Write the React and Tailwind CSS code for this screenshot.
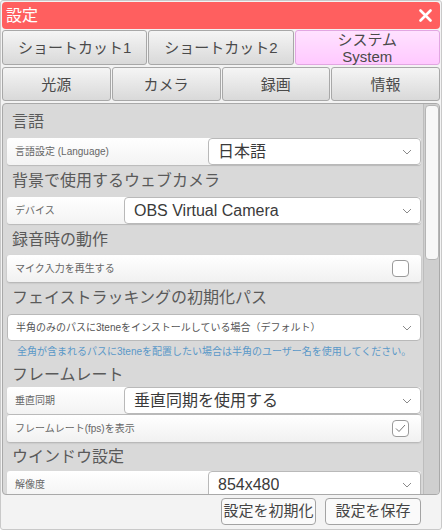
import React from 'react'

const font = { fontFamily: '"Liberation Sans", "Noto Sans CJK JP", sans-serif' }

const Chevron = () => (
  <svg width="10" height="6" viewBox="0 0 10 6" className="shrink-0">
    <path d="M1 1 L5 5 L9 1" fill="none" stroke="#8a8a8a" strokeWidth="1" />
  </svg>
)

const Tab = ({ children, active, className = '' }) => (
  <div
    className={
      'flex items-center justify-center rounded-[3px] border text-[15px] leading-none text-[#4a4a4a] ' +
      (active
        ? 'border-[#e2a6e2] bg-gradient-to-b from-[#ffe2ff] to-[#ffc9ff] '
        : 'border-[#a8a8a8] bg-gradient-to-b from-[#f5f5f5] to-[#d9d9d9] ') +
      className
    }
  >
    {children}
  </div>
)

const Heading = ({ children, className = 'h-[32px]' }) => (
  <div className={'flex items-center pl-[5px] text-[16px] text-[#5a5a5a] ' + className}>{children}</div>
)

const Select = ({ value, small, className = '' }) => (
  <div
    className={
      'flex h-full items-center justify-between rounded-[4px] border border-[#b9b9b9] bg-white pr-[8px] ' +
      (small ? 'pl-[8px] text-[10px] text-[#555] ' : 'pl-[9px] text-[16px] text-[#3a3a3a] ') +
      className
    }
  >
    <span className="truncate">{value}</span>
    <Chevron />
  </div>
)

const Row = ({ label, children, selectLeft }) => (
  <div className="flex h-[27px] rounded-[3px] bg-gradient-to-b from-white to-[#f3f3f3] shadow-[0_1px_1px_rgba(0,0,0,0.15)]">
    <div className={'flex items-center pl-[8px] text-[10px] text-[#666] ' + selectLeft}>{label}</div>
    <div className="flex-1">{children}</div>
  </div>
)

const Checkbox = ({ checked }) => (
  <div className="flex h-[17px] w-[17px] items-center justify-center rounded-[4px] border border-[#9a9a9a] bg-white">
    {checked && (
      <svg width="11" height="9" viewBox="0 0 11 9">
        <path d="M1 4.5 L4 7.5 L10 1" fill="none" stroke="#777" strokeWidth="1" />
      </svg>
    )}
  </div>
)

const CheckRow = ({ label, checked }) => (
  <div className="flex h-[27px] items-center justify-between rounded-[3px] bg-gradient-to-b from-white to-[#f1f1f1] pl-[8px] pr-[12px] shadow-[0_1px_2px_rgba(0,0,0,0.2)]">
    <span className="text-[10px] text-[#666]">{label}</span>
    <Checkbox checked={checked} />
  </div>
)

export default function App() {
  return (
    <div style={font} className="flex h-[530px] w-[442px] flex-col overflow-hidden rounded-[3px] border border-[#c9c9c9] bg-[#f3f3f3] px-px pt-px">
      <div className="flex h-[27px] shrink-0 items-center justify-between rounded-[4px] bg-[#ff5f5f] pl-[4px] pr-[8px] text-[16px] text-white">
        <span>設定</span>
        <svg width="13" height="13" viewBox="0 0 13 13">
          <path d="M1.5 1.5 L11.5 11.5 M11.5 1.5 L1.5 11.5" stroke="white" strokeWidth="2.6" strokeLinecap="round" />
        </svg>
      </div>

      <div className="mt-px grid h-[35px] shrink-0 grid-cols-3 gap-px">
        <Tab>ショートカット1</Tab>
        <Tab>ショートカット2</Tab>
        <Tab active className="flex-col gap-[2px] text-[13px]">
          <span className="leading-none">システム</span>
          <span className="leading-none">System</span>
        </Tab>
      </div>

      <div className="mt-[2px] grid h-[34px] shrink-0 grid-cols-4 gap-px">
        <Tab>光源</Tab>
        <Tab>カメラ</Tab>
        <Tab>録画</Tab>
        <Tab>情報</Tab>
      </div>

      <div className="mt-[2px] flex h-[392px] shrink-0 overflow-hidden rounded-[4px] border border-[#a9a9a9] bg-[#d9d9d9]">
        <div className="flex-1 overflow-hidden pl-[4px] pr-[2px] pt-[2px]">
          <Heading>言語</Heading>
          <Row label="言語設定 (Language)" selectLeft="w-[201px]">
            <Select value="日本語" />
          </Row>
          <Heading>背景で使用するウェブカメラ</Heading>
          <Row label="デバイス" selectLeft="w-[117px]">
            <Select value="OBS Virtual Camera" />
          </Row>
          <Heading className="h-[31px]">録音時の動作</Heading>
          <CheckRow label="マイク入力を再生する" />
          <Heading>フェイストラッキングの初期化パス</Heading>
          <div className="h-[27px]">
            <Select small value="半角のみのパスに3teneをインストールしている場合（デフォルト）" />
          </div>
          <div className="flex h-[21px] items-center pl-[10px] text-[10px] text-[#5a98c8]">
            全角が含まれるパスに3teneを配置したい場合は半角のユーザー名を使用してください。
          </div>
          <Heading className="h-[25px]">フレームレート</Heading>
          <Row label="垂直同期" selectLeft="w-[117px]">
            <Select value="垂直同期を使用する" />
          </Row>
          <div className="mt-px">
            <CheckRow label="フレームレート(fps)を表示" checked />
          </div>
          <Heading className="h-[29px]">ウインドウ設定</Heading>
          <Row label="解像度" selectLeft="w-[201px]">
            <Select value="854x480" />
          </Row>
        </div>
        <div className="w-[16px] shrink-0 border-l border-[#bdbdbd] bg-[#cfcfcf] pt-px">
          <div className="mx-auto h-[155px] w-[14px] rounded-[4px] border border-[#b5b5b5] bg-[#f7f7f7]" />
        </div>
      </div>

      <div className="flex flex-1 items-start justify-end gap-[9px] pr-[19px] pt-[3px]">
        <div className="flex h-[27px] w-[95px] items-center justify-center rounded-[4px] border border-[#a3a3a3] bg-[#fafafa] text-[15px] text-[#444]">
          設定を初期化
        </div>
        <div className="flex h-[27px] w-[96px] items-center justify-center rounded-[4px] border border-[#a3a3a3] bg-[#fafafa] text-[15px] text-[#444]">
          設定を保存
        </div>
      </div>
    </div>
  )
}
